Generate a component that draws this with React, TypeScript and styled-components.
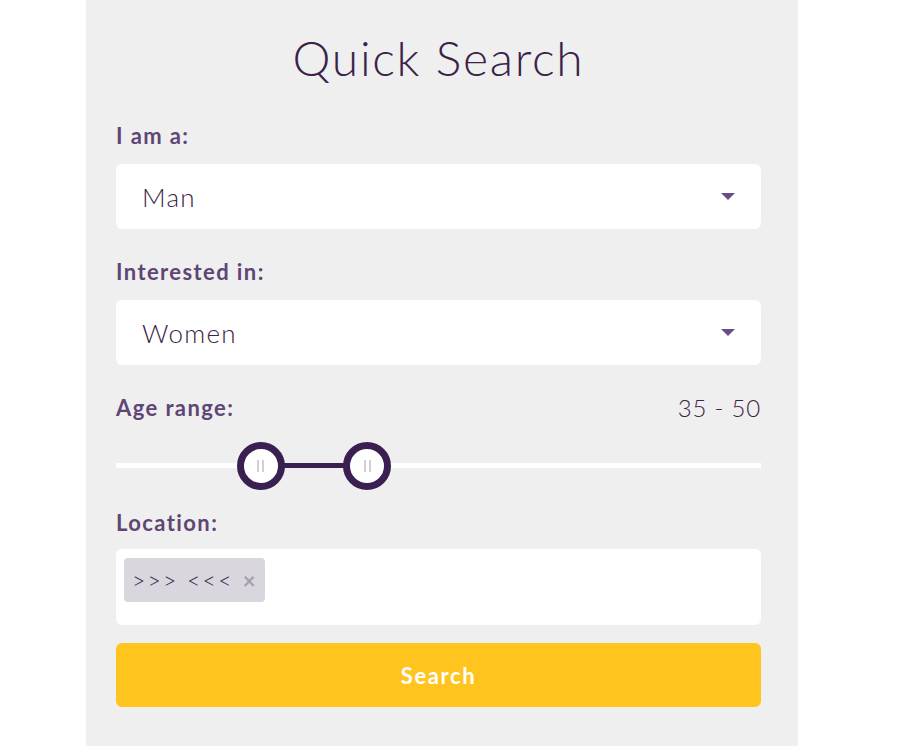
import React from "react";
import styled, { createGlobalStyle } from "styled-components";

const Global = createGlobalStyle`
  html, body { margin: 0; padding: 0; background: #ffffff; }
  body { font-family: "Lato", "Open Sans", sans-serif; }
  * { box-sizing: border-box; }
`;

const Panel = styled.div`
  margin-left: 86px;
  width: 712px;
  min-height: 746px;
  background: #efefef;
  padding: 31px 37px 30px 30px;
`;

const Title = styled.h1`
  margin: 0 0 38px;
  text-align: center;
  font-weight: 300;
  font-size: 48px;
  line-height: 54px;
  color: #3b2348;
  letter-spacing: 1.7px;
`;

const Field = styled.div<{ $gap?: number }>`
  margin-bottom: ${(p) => p.$gap ?? 30}px;
`;

const LabelRow = styled.div<{ $mb?: number }>`
  display: flex;
  justify-content: space-between;
  align-items: center;
  height: 24px;
  margin-bottom: ${(p) => p.$mb ?? 17}px;
`;

const Label = styled.label`
  font-weight: 700;
  font-size: 22px;
  letter-spacing: 1.4px;
  color: #5e4675;
`;

const Value = styled.span`
  font-size: 24px;
  font-weight: 300;
  letter-spacing: 0.8px;
  color: #3b2348;
`;

const Select = styled.div`
  height: 65px;
  background: #ffffff;
  border-radius: 6px;
  display: flex;
  align-items: center;
  justify-content: space-between;
  padding: 0 26px 0 26px;
  font-size: 26px;
  font-weight: 300;
  letter-spacing: 1.3px;
  color: #3b2348;
`;

const Caret = styled.span`
  width: 0;
  height: 0;
  border-left: 7px solid transparent;
  border-right: 7px solid transparent;
  border-top: 7px solid #6a4c86;
`;

const SliderWrap = styled.div`
  position: relative;
  height: 48px;
`;

const Track = styled.div`
  position: absolute;
  left: 0;
  right: 0;
  top: 21px;
  height: 5px;
  background: #ffffff;
`;

const RangeBar = styled.div`
  position: absolute;
  top: 21px;
  height: 5px;
  background: #3a2050;
`;

const Handle = styled.div`
  position: absolute;
  top: 0;
  width: 48px;
  height: 48px;
  margin-left: -24px;
  border-radius: 50%;
  border: 7px solid #3a2050;
  background: #ffffff;
  display: flex;
  align-items: center;
  justify-content: center;
  gap: 3px;
`;

const Grip = styled.span`
  width: 2px;
  height: 12px;
  background: #d2cfd5;
`;

const TagBox = styled.div`
  height: 76px;
  background: #ffffff;
  border-radius: 6px;
  padding: 9px 8px;
  margin-bottom: 18px;
`;

const Tag = styled.span`
  display: inline-flex;
  align-items: center;
  gap: 9px;
  height: 44px;
  padding: 0 10px 0 8px;
  background: #d9d6de;
  border-radius: 4px;
  font-size: 23px;
  font-weight: 300;
  letter-spacing: 2.2px;
  color: #3b2348;
`;

const TagClose = styled.span`
  font-size: 22px;
  font-weight: 700;
  letter-spacing: 0;
  color: #a59fab;
`;

const Button = styled.button`
  display: block;
  width: 100%;
  height: 64px;
  border: 0;
  border-radius: 6px;
  background: #ffc41e;
  color: #ffffff;
  font-family: "Lato", sans-serif;
  font-weight: 700;
  font-size: 22px;
  letter-spacing: 1.6px;
  cursor: pointer;
`;

const MIN = 18;
const MAX = 102;
const WIDTH = 645;

const pos = (v: number) => 24 + ((v - MIN) / (MAX - MIN)) * (WIDTH - 48);

export default function App() {
  const lo = 35;
  const hi = 50;
  return (
    <>
      <Global />
      <Panel>
        <Title>Quick Search</Title>
        <Field>
          <LabelRow>
            <Label>I am a:</Label>
          </LabelRow>
          <Select>
            Man
            <Caret />
          </Select>
        </Field>
        <Field>
          <LabelRow>
            <Label>Interested in:</Label>
          </LabelRow>
          <Select>
            Women
            <Caret />
          </Select>
        </Field>
        <Field $gap={20}>
          <LabelRow $mb={23}>
            <Label>Age range:</Label>
            <Value>
              {lo} - {hi}
            </Value>
          </LabelRow>
          <SliderWrap>
            <Track />
            <RangeBar style={{ left: pos(lo), width: pos(hi) - pos(lo) }} />
            <Handle style={{ left: pos(lo) }}>
              <Grip />
              <Grip />
            </Handle>
            <Handle style={{ left: pos(hi) }}>
              <Grip />
              <Grip />
            </Handle>
          </SliderWrap>
        </Field>
        <Field $gap={0}>
          <LabelRow $mb={15}>
            <Label>Location:</Label>
          </LabelRow>
          <TagBox>
            <Tag>
              &gt;&gt;&gt; &lt;&lt;&lt;
              <TagClose>×</TagClose>
            </Tag>
          </TagBox>
        </Field>
        <Button>Search</Button>
      </Panel>
    </>
  );
}
